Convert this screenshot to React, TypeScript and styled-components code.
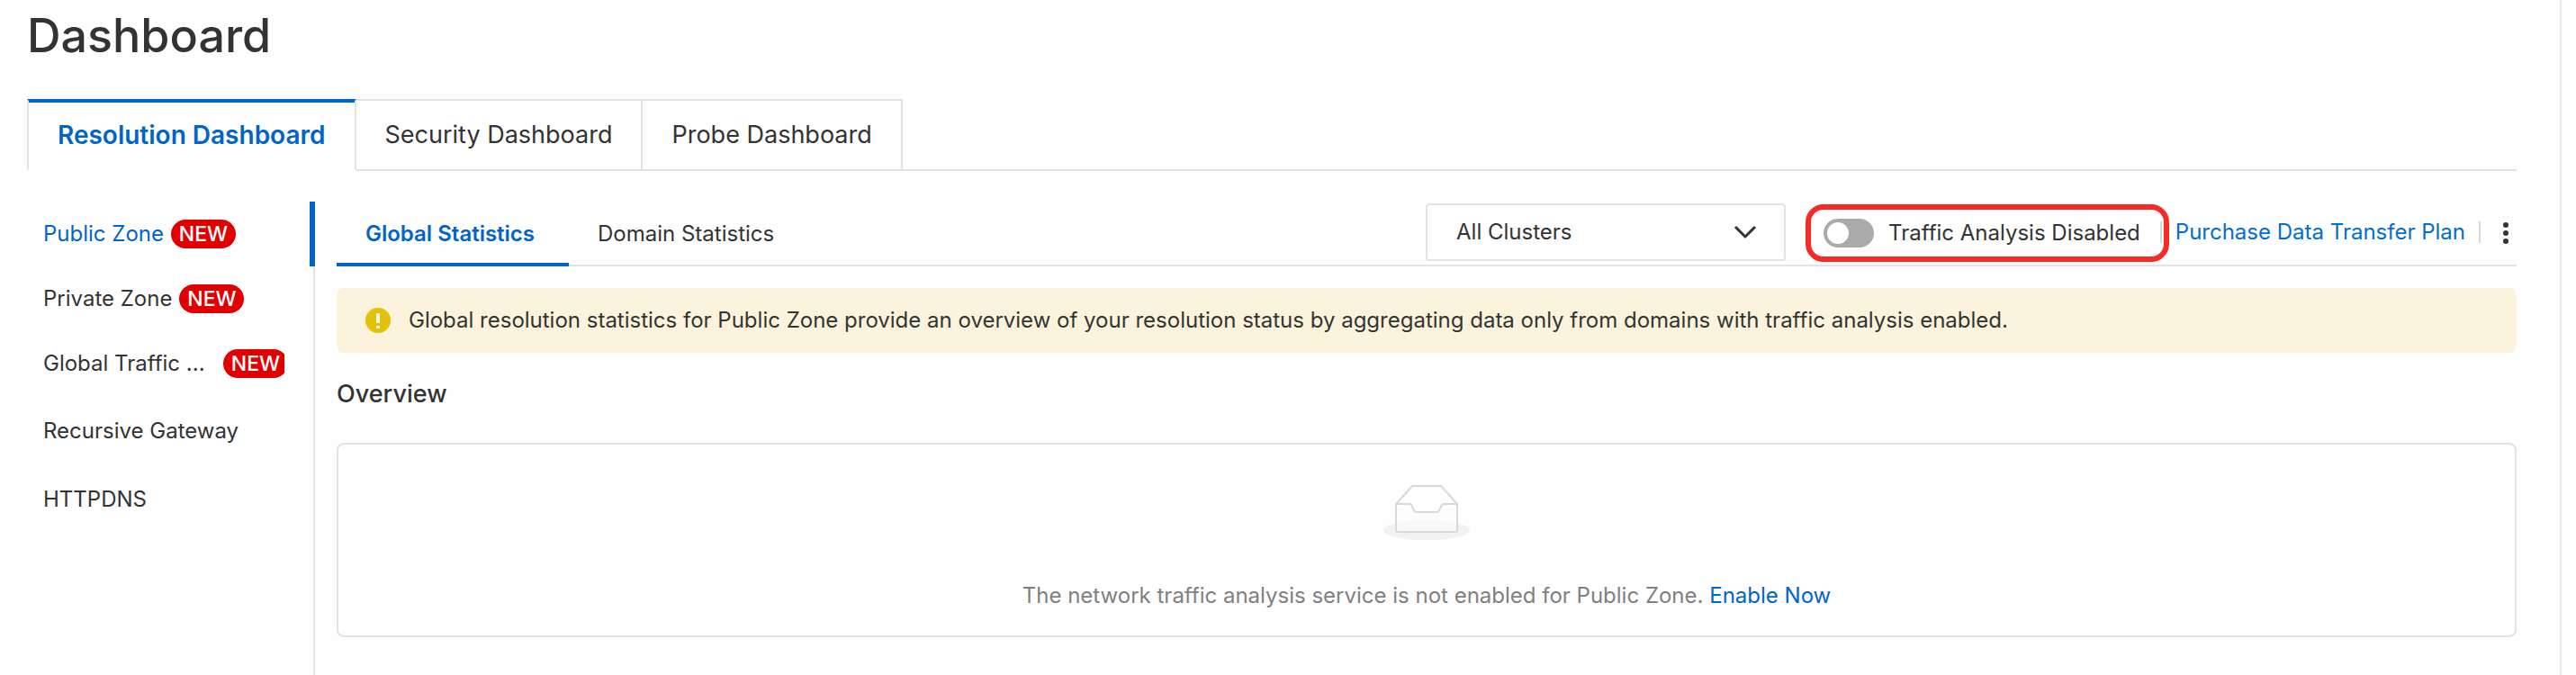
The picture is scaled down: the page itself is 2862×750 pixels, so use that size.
import React, { useState } from 'react';
import styled, { createGlobalStyle } from 'styled-components';

const color = {
  text: '#333333',
  muted: '#808080',
  blue: '#0064c8',
  link: '#0070cc',
  line: '#e3e3e3',
  badge: '#e00000',
};

const GlobalStyle = createGlobalStyle`
  *, *::before, *::after { box-sizing: border-box; }
  body {
    margin: 0;
    background: #fefefe;
    color: ${color.text};
    font-family: Inter, "Liberation Sans", sans-serif;
    font-size: 24px;
    line-height: 32px;
  }
  button, select {
    margin: 0;
    padding: 0;
    border: 0;
    background: none;
    color: inherit;
    font: inherit;
    cursor: pointer;
  }
  a { text-decoration: none; }
`;

const Shell = styled.div`
  display: flex;
  min-height: 100vh;
  padding-right: 16px;
`;

const Page = styled.main`
  flex: 1;
  min-width: 0;
  display: flex;
  flex-direction: column;
  padding: 8px 48px 0 30px;
  border-right: 2px solid #e6ebf0;
`;

const Title = styled.h1`
  margin: 0 0 38px;
  font-size: 52px;
  line-height: 64px;
  font-weight: 500;
`;

const MainTabs = styled.nav`
  display: flex;
  height: 80px;
  box-shadow: inset 0 -2px ${color.line};
`;

const MainTab = styled.button<{ $active?: boolean }>`
  padding: 0 32px;
  border: 2px solid ${color.line};
  border-left-width: ${p => (p.$active ? '2px' : '0')};
  font-size: 27px;
  white-space: nowrap;
  ${p =>
    p.$active &&
    `
    border-top-color: ${color.blue};
    border-bottom-color: #fefefe;
    box-shadow: inset 0 2px ${color.blue};
    color: ${color.blue};
    font-size: 28px;
    font-weight: 600;
  `}
`;

const Body = styled.div`
  flex: 1;
  display: flex;
  gap: 24px;
  margin-top: 34px;
`;

const Sidebar = styled.nav`
  flex: none;
  width: 320px;
  border-right: 2px solid ${color.line};
`;

const SideItem = styled.a<{ $active?: boolean; $tall?: boolean }>`
  display: flex;
  align-items: center;
  gap: 8px;
  height: ${p => (p.$tall ? '76px' : '72px')};
  margin-right: 32px;
  padding: ${p => (p.$tall ? '2px' : '0')} 0 0 18px;
  overflow: hidden;
  color: ${p => (p.$active ? color.blue : color.text)};
  white-space: nowrap;
`;

const ActiveSlot = styled.div`
  margin-right: -2px;
  border-right: 6px solid ${color.blue};
`;

const SideLabel = styled.span<{ $wide?: boolean }>`
  flex: none;
  width: ${p => (p.$wide ? '192px' : 'auto')};
`;

const Badge = styled.span`
  flex: none;
  width: 72px;
  border-radius: 16px;
  background: ${color.badge};
  color: #fff;
  font-size: 23px;
  font-weight: 500;
  text-align: center;
`;

const Content = styled.section`
  flex: 1;
  min-width: 0;
`;

const Toolbar = styled.div`
  display: flex;
  justify-content: space-between;
  height: 72px;
  box-shadow: inset 0 -2px ${color.line};
`;

const SubTabs = styled.div`
  display: flex;
`;

const SubTab = styled.button<{ $active?: boolean }>`
  min-width: 258px;
  padding: 4px 32px 0;
  border-bottom: 4px solid ${p => (p.$active ? color.blue : 'transparent')};
  color: ${p => (p.$active ? color.blue : color.text)};
  font-weight: ${p => (p.$active ? 600 : 400)};
  text-align: left;
  white-space: nowrap;
`;

const Tools = styled.div`
  display: flex;
  align-items: center;
  height: 68px;
`;

const SelectBox = styled.div`
  display: grid;
  align-items: center;
  width: 400px;
  height: 64px;
  margin-right: 42px;
  > * { grid-area: 1 / 1; }
  > svg {
    justify-self: end;
    margin-right: 32px;
    pointer-events: none;
  }
`;

const Select = styled.select`
  appearance: none;
  width: 100%;
  height: 100%;
  padding: 0 32px;
  border: 2px solid ${color.line};
  border-radius: 4px;
`;

const SwitchLabel = styled.label`
  position: relative;
  display: flex;
  align-items: center;
  gap: 16px;
  margin-right: 22px;
  padding-top: 2px;
  white-space: nowrap;
  cursor: pointer;
`;

const Highlight = styled.span`
  position: absolute;
  z-index: 1;
  inset: -14px -32px -16px -20px;
  border: 6px solid #f52b26;
  border-radius: 20px;
  pointer-events: none;
`;

const Switch = styled.input`
  appearance: none;
  flex: none;
  width: 56px;
  height: 32px;
  margin: 0;
  padding: 4px;
  border-radius: 16px;
  background: #aaaaaa;
  cursor: pointer;
  &::before {
    content: '';
    display: block;
    width: 24px;
    height: 24px;
    border-radius: 50%;
    background: #fff;
  }
  &:checked { background: ${color.blue}; }
  &:checked::before { margin-left: 24px; }
`;

const Divider = styled.span`
  width: 2px;
  height: 24px;
  background: #d9d9d9;
`;

const PlanLink = styled.a`
  margin: 0 15px;
  color: ${color.link};
  white-space: nowrap;
`;

const MoreButton = styled.button`
  display: flex;
  margin-left: 16px;
`;

const Notice = styled.div`
  display: flex;
  align-items: center;
  gap: 20px;
  min-height: 72px;
  margin-top: 24px;
  padding: 0 32px;
  border-radius: 8px;
  background: #fcf3dc;
  > svg { flex: none; }
`;

const SectionTitle = styled.h2`
  margin: 28px 0 36px;
  font-size: 27px;
  line-height: 36px;
  font-weight: 500;
`;

const EmptyCard = styled.div`
  display: flex;
  flex-direction: column;
  align-items: center;
  min-height: 216px;
  padding-top: 44px;
  border: 2px solid ${color.line};
  border-radius: 8px;
  color: ${color.muted};
`;

const EmptyText = styled.p`
  margin: 44px 0 0;
  a { color: ${color.blue}; }
`;

const ChevronIcon = () => (
  <svg width="26" height="18" viewBox="0 0 26 18" fill="none" stroke="#333" strokeWidth="3" aria-hidden="true">
    <path d="M2 3 L13 14 L24 3" strokeLinejoin="round" />
  </svg>
);

const MoreIcon = () => (
  <svg width="24" height="32" viewBox="0 0 24 32" fill="#333" aria-hidden="true">
    <circle cx="12" cy="8" r="3" />
    <circle cx="12" cy="17" r="3" />
    <circle cx="12" cy="26" r="3" />
  </svg>
);

const WarningIcon = () => (
  <svg width="28" height="28" viewBox="0 0 28 28" aria-hidden="true">
    <circle cx="14" cy="14" r="14" fill="#e3c00b" />
    <path d="M12 6h4v11h-4zM12 20h4v3h-4z" fill="#fcf3dc" />
  </svg>
);

const EmptyIcon = () => (
  <svg width="96" height="64" viewBox="0 0 96 64" fill="none" stroke="#d9d9d9" strokeWidth="2" strokeLinejoin="round" aria-hidden="true">
    <ellipse cx="48" cy="51" rx="48" ry="11" fill="#f2f2f2" stroke="none" />
    <path d="M14 22 L32 2 H64 L82 22" fill="#fefefe" />
    <path d="M14 22 H29.500 C33 22 32 31 37 31 H59 C64 31 63 22 66.500 22 H82 V51 Q82 53 80 53 H16 Q14 53 14 51 Z" fill="#fcfcfc" fillOpacity="0.6" />
  </svg>
);

const mainTabs = ['Resolution Dashboard', 'Security Dashboard', 'Probe Dashboard'];
const subTabs = ['Global Statistics', 'Domain Statistics'];

export default function App() {
  const [tab, setTab] = useState(0);
  const [subTab, setSubTab] = useState(0);

  return (
    <Shell>
      <GlobalStyle />
      <Page>
        <Title>Dashboard</Title>
        <MainTabs aria-label="Dashboards">
          {mainTabs.map((name, i) => (
            <MainTab key={name} type="button" $active={i === tab} onClick={() => setTab(i)}>
              {name}
            </MainTab>
          ))}
        </MainTabs>
        <Body>
          <Sidebar aria-label="Products">
            <ActiveSlot>
              <SideItem href="#public-zone" $active aria-current="page">
                <SideLabel>Public Zone</SideLabel>
                <Badge>NEW</Badge>
              </SideItem>
            </ActiveSlot>
            <SideItem href="#private-zone">
              <SideLabel>Private Zone</SideLabel>
              <Badge>NEW</Badge>
            </SideItem>
            <SideItem href="#global-traffic">
              <SideLabel $wide>Global Traffic ...</SideLabel>
              <Badge>NEW</Badge>
            </SideItem>
            <SideItem href="#recursive-gateway" $tall>
              <SideLabel>Recursive Gateway</SideLabel>
            </SideItem>
            <SideItem href="#httpdns" $tall>
              <SideLabel>HTTPDNS</SideLabel>
            </SideItem>
          </Sidebar>
          <Content>
            <Toolbar>
              <SubTabs>
                {subTabs.map((name, i) => (
                  <SubTab key={name} type="button" $active={i === subTab} onClick={() => setSubTab(i)}>
                    {name}
                  </SubTab>
                ))}
              </SubTabs>
              <Tools>
                <SelectBox>
                  <Select aria-label="Cluster">
                    <option>All Clusters</option>
                  </Select>
                  <ChevronIcon />
                </SelectBox>
                <SwitchLabel>
                  <Switch type="checkbox" role="switch" />
                  Traffic Analysis Disabled
                  <Highlight />
                </SwitchLabel>
                <Divider />
                <PlanLink href="#purchase">Purchase Data Transfer Plan</PlanLink>
                <Divider />
                <MoreButton type="button" aria-label="More">
                  <MoreIcon />
                </MoreButton>
              </Tools>
            </Toolbar>
            <Notice role="note">
              <WarningIcon />
              <span>
                Global resolution statistics for Public Zone provide an overview of your resolution status by
                aggregating data only from domains with traffic analysis enabled.
              </span>
            </Notice>
            <SectionTitle>Overview</SectionTitle>
            <EmptyCard>
              <EmptyIcon />
              <EmptyText>
                The network traffic analysis service is not enabled for Public Zone. <a href="#enable">Enable Now</a>
              </EmptyText>
            </EmptyCard>
          </Content>
        </Body>
      </Page>
    </Shell>
  );
}
